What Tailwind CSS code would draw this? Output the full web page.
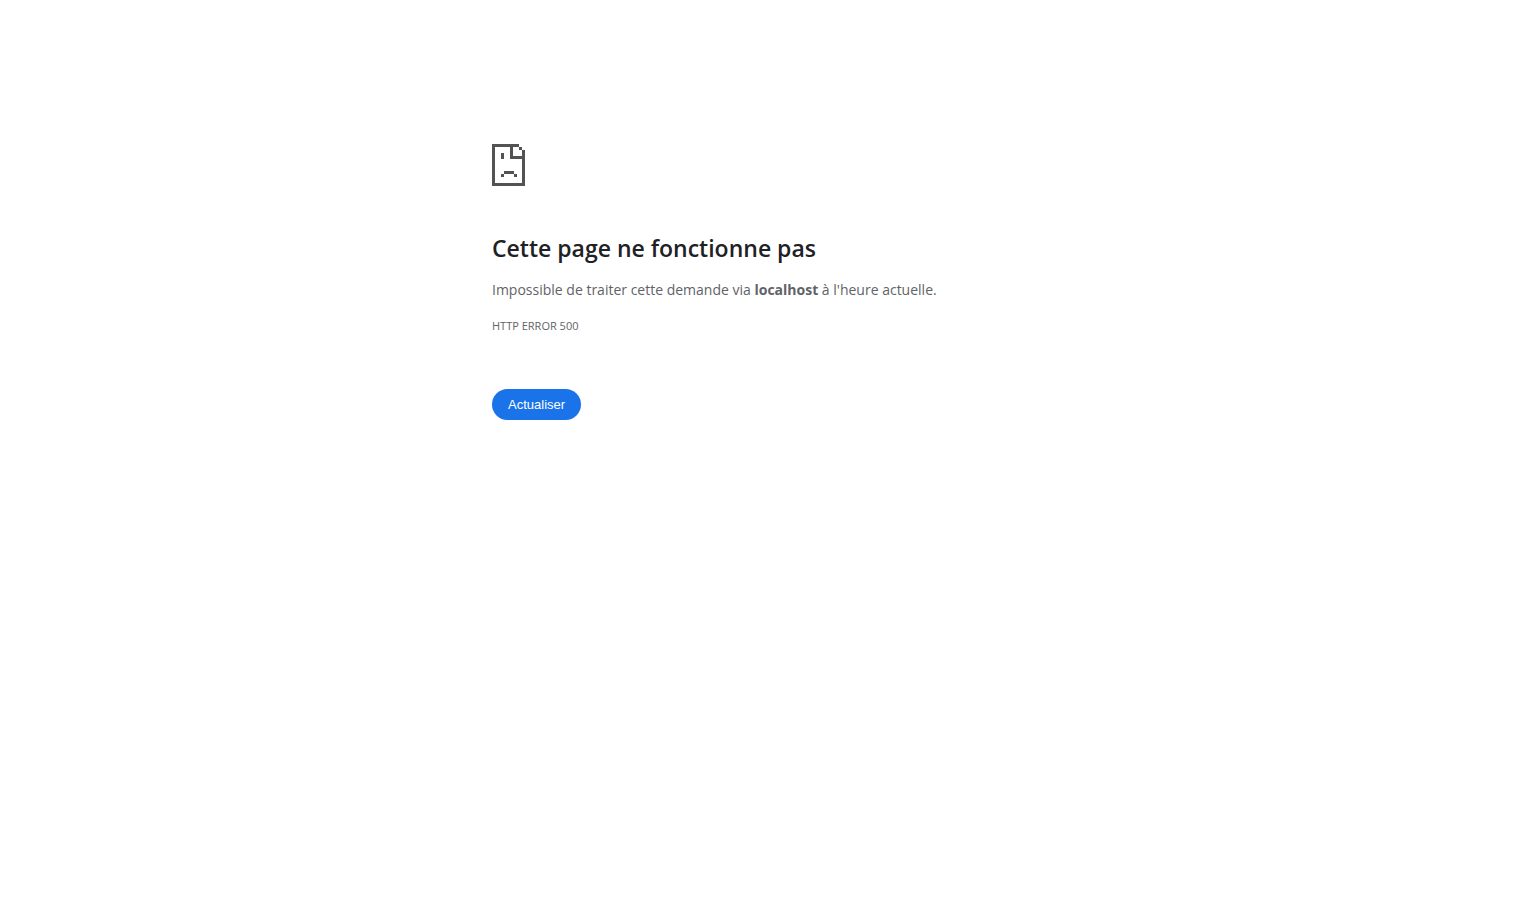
<!DOCTYPE html>
<html lang="fr">
  <head>
    <meta charset="UTF-8" />
    <meta name="viewport" content="width=device-width, initial-scale=1.0" />
    <script src="https://cdn.jsdelivr.net/npm/@tailwindcss/browser@4"></script>

    <title>localhost</title>
  </head>
  <body class="bg-white font-['Open_Sans',sans-serif] text-[#5f6368]">
    <main class="max-w-[548px] mx-auto pt-36">
      <svg
        class="block w-[33px] h-[42px] text-[#535353]"
        viewBox="0 0 33 42"
        fill="currentColor"
        shape-rendering="crispEdges"
        aria-hidden="true"
      >
        <path d="M0 0h27v3h-6v9h9V6h3v36H0V0zm3 3v36h27V15H18V3H3z" />
        <path d="M27 3h3v3h-3z" />
        <path d="M9 9h3v6H9z" />
        <path d="M12 27h10v3H12z" />
        <path d="M9 30h3v3H9zM22 30h3v3h-3z" />
      </svg>

      <h1 class="mt-12 text-[23px] leading-7 font-semibold text-[#202124]">
        Cette page ne fonctionne pas
      </h1>
      <p class="mt-4 text-[14px] leading-6">
        Impossible de traiter cette demande via <strong>localhost</strong> à
        l'heure actuelle.
      </p>
      <p class="mt-3 text-[11px] leading-6">HTTP ERROR 500</p>

      <button
        type="button"
        class="mt-[51px] block rounded-full bg-[#1a73e8] px-4 py-2 font-['Liberation_Sans',Arial,sans-serif] text-[13px] leading-[15px] font-medium text-white"
      >
        Actualiser
      </button>
    </main>
  </body>
</html>
